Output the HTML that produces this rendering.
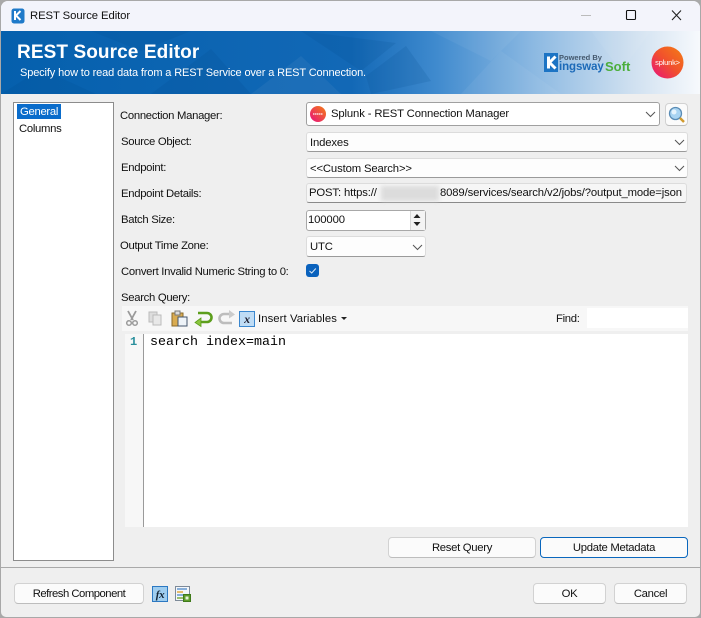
<!DOCTYPE html>
<html><head><meta charset="utf-8"><style>
html,body{margin:0;padding:0;background:#a9a9a9}
#w{position:relative;width:701px;height:618px;overflow:hidden;background:#efefef;font:11.3px "Liberation Sans",sans-serif;letter-spacing:-.3px;color:#111;box-sizing:border-box;border:1px solid #a8a8a8;border-radius:8px 8px 6px 6px}
#w>*{position:absolute}
.t{white-space:nowrap;line-height:14px}
.v{letter-spacing:-.14px}
.f{background:#fdfdfd;border:1px solid #dcdcdc;border-bottom-color:#9a9a9a;border-radius:3px;box-sizing:border-box}
.b{background:#fbfbfb;border:1px solid #d2d2d2;border-bottom-color:#bdbdbd;border-radius:4px;box-sizing:border-box;text-align:center;line-height:21px;white-space:nowrap}
</style></head><body>
<div id="w" style="left:0;top:0">
<div style="left:0;top:0;width:701px;height:30px;background:#f3f4fb"></div>
<svg style="left:10px;top:7px" width="14" height="16"><rect width="13" height="15" x=".5" y=".5" rx="2.5" fill="#1f7ac9"/><path d="M4 3v9M9.500 3L5 7.500l4.500 4.500" stroke="#fff" stroke-width="2" fill="none"/></svg>
<div class="t" style="left:29px;top:8px;letter-spacing:-.08px">REST Source Editor</div>
<svg style="left:579px;top:7px" width="115" height="16" fill="none"><path d="M1 7.500h10" stroke="#bbb"/><rect x="46.500" y="2.500" width="9" height="9" rx="1" stroke="#111" stroke-width="1.100"/><path d="M92 2.500l9 9.500M101 2.500l-9 9.500" stroke="#222" stroke-width="1.100"/></svg>

<svg style="left:0;top:30px" width="701" height="63" viewBox="0 0 701 63">
<defs><linearGradient id="g"><stop offset="0" stop-color="#0560ad"/><stop offset=".5" stop-color="#1268b6"/><stop offset=".62" stop-color="#3f8ace"/><stop offset=".76" stop-color="#8cb9e2"/><stop offset=".9" stop-color="#cfe0f0"/><stop offset="1" stop-color="#f8fafd"/></linearGradient></defs>
<rect width="701" height="63" fill="url(#g)"/>
<g fill="#03478a" opacity=".14"><polygon points="0,63 40,38 95,63"/><polygon points="150,63 210,18 250,63"/><polygon points="300,0 360,40 395,12"/><polygon points="370,63 365,45 405,15 430,50"/><polygon points="90,0 140,20 190,0"/></g>
<g fill="#fff" opacity=".05"><polygon points="430,0 490,30 520,0"/><polygon points="460,63 500,20 560,63"/><polygon points="250,63 300,25 340,63"/><polygon points="590,0 620,40 650,0"/></g>
</svg>
<div class="t" style="left:16px;top:40px;font:bold 19px/24px 'Liberation Sans',sans-serif;color:#fff;letter-spacing:.1px">REST Source Editor</div>
<div class="t" style="left:19px;top:65px;color:#fff;font-size:11px;letter-spacing:-.13px">Specify how to read data from a REST Service over a REST Connection.</div>

<svg style="left:543px;top:52px" width="14" height="19"><rect width="14" height="19" fill="#1d74c4"/><path d="M4.500 3.500v12M11.500 3.500L5.500 9.500l6 6" stroke="#fff" stroke-width="3" fill="none"/></svg>
<div class="t" style="left:558px;top:52px;font:bold 7.500px/9px 'Liberation Sans',sans-serif;color:#45596e;letter-spacing:0">Powered By</div>
<div class="t" style="left:558px;top:59px;font:bold 11.500px/14px 'Liberation Sans',sans-serif;color:#1c6ab8;letter-spacing:-.1px">ingsway</div>
<div class="t" style="left:604px;top:58px;font:bold 13px/15px 'Liberation Sans',sans-serif;color:#4cae3c;letter-spacing:0">Soft</div>
<svg style="left:650px;top:45px" width="33" height="33"><defs><linearGradient id="s" x1="0" y1="1" x2="1" y2="0"><stop offset="0" stop-color="#e8107e"/><stop offset=".5" stop-color="#f1502d"/><stop offset="1" stop-color="#f47f14"/></linearGradient></defs><circle cx="16.500" cy="16.500" r="16" fill="url(#s)"/><text x="16.500" y="19" font-family="Liberation Sans" font-size="7.500" fill="#fff" text-anchor="middle" letter-spacing="-.2">splunk&gt;</text></svg>

<div style="left:12px;top:101px;width:101px;height:459px;background:#fff;border:1px solid #8c8c8c;box-sizing:border-box"></div>
<div class="t" style="left:16px;top:103px;width:44px;height:15px;line-height:16px;background:#0a6ccb;color:#fff;padding-left:3px;box-sizing:border-box">General</div>
<div class="t" style="left:18px;top:121px">Columns</div>

<div class="t" style="left:119px;top:108px">Connection Manager:</div>
<div class="t" style="left:120px;top:134px">Source Object:</div>
<div class="t" style="left:120px;top:160px">Endpoint:</div>
<div class="t" style="left:120px;top:186px">Endpoint Details:</div>
<div class="t" style="left:120px;top:212px">Batch Size:</div>
<div class="t" style="left:119px;top:238px">Output Time Zone:</div>
<div class="t" style="left:120px;top:264px">Convert Invalid Numeric String to 0:</div>
<div class="t" style="left:120px;top:290px">Search Query:</div>

<div class="f" style="left:305px;top:101px;width:354px;height:24px;border-color:#a0a0a0;background:#fff"></div>
<svg style="left:309px;top:105px" width="16" height="16"><defs><linearGradient id="s2" x1="0" y1="1" x2="1" y2="0"><stop offset="0" stop-color="#e8107e"/><stop offset="1" stop-color="#f47f14"/></linearGradient></defs><circle cx="8" cy="8" r="8" fill="url(#s2)"/><path d="M3 8h10" stroke="#fff" stroke-width="1.500" stroke-dasharray="1.500 .5" opacity=".8"/></svg>
<div class="t v" style="left:330px;top:106px">Splunk - REST Connection Manager</div>
<svg style="left:644px;top:110px" width="11" height="7" fill="none"><path d="M1 1l4.500 4.500L10 1" stroke="#555"/></svg>
<div class="b" style="left:664px;top:102px;width:23px;height:23px"></div>
<svg style="left:667px;top:105px" width="18" height="18"><circle cx="7.500" cy="7.500" r="6" fill="#a9d4f2" stroke="#5a8cb5" stroke-width="1.300"/><circle cx="6" cy="6" r="2.500" fill="#e6f4fd"/><path d="M12 12l4 4" stroke="#d19a2e" stroke-width="2.500"/></svg>

<div class="f" style="left:305px;top:131px;width:382px;height:20px"></div>
<div class="t v" style="left:309px;top:135px">Indexes</div>
<svg style="left:673px;top:138px" width="11" height="7" fill="none"><path d="M1 1l4.500 4.500L10 1" stroke="#555"/></svg>
<div class="f" style="left:305px;top:157px;width:382px;height:20px"></div>
<div class="t v" style="left:309px;top:161px">&lt;&lt;Custom Search&gt;&gt;</div>
<svg style="left:673px;top:164px" width="11" height="7" fill="none"><path d="M1 1l4.500 4.500L10 1" stroke="#555"/></svg>

<div class="f" style="left:305px;top:182px;width:381px;height:20px;background:#f6f6f6;border-bottom-color:#8a8a8a"></div>
<div class="t v" style="left:308px;top:185px">POST: https://</div>
<div style="left:380px;top:185px;width:58px;height:15px;background:#dcdcdc;filter:blur(2px)"></div>
<div class="t v" style="left:439px;top:185px">8089/services/search/v2/jobs/?output_mode=json</div>

<div class="f" style="left:305px;top:209px;width:120px;height:21px;border-color:#a8a8a8;background:#fff"></div>
<div class="t v" style="left:307px;top:212px">100000</div>
<div style="left:409px;top:210px;width:15px;height:19px;background:#f4f4f4;border-left:1px solid #d8d8d8;box-sizing:border-box"></div>
<svg style="left:411px;top:211px" width="10" height="16"><path d="M5 2L8.500 6h-7zM5 14L1.500 10h7z" fill="#222"/></svg>

<div class="f" style="left:305px;top:235px;width:120px;height:21px"></div>
<div class="t v" style="left:309px;top:239px">UTC</div>
<svg style="left:411px;top:243px" width="11" height="7" fill="none"><path d="M1 1l4.500 4.500L10 1" stroke="#555"/></svg>

<div style="left:305px;top:263px;width:13px;height:13px;background:#0a62bd;border-radius:3px"></div>
<svg style="left:305px;top:263px" width="13" height="13" fill="none"><path d="M3.500 7l2.200 2L9.800 4.500" stroke="#dbe9f7" stroke-width="1"/></svg>

<div style="left:121px;top:305px;width:566px;height:25px;background:#f7f7f7"></div>
<svg style="left:124px;top:308px" width="140" height="20">
<path d="M3 2l5 9M11 2L6 11" stroke="#9a9a9a" stroke-width="1.800" fill="none"/><circle cx="4" cy="14" r="2.300" fill="none" stroke="#9a9a9a" stroke-width="1.500"/><circle cx="10" cy="14" r="2.300" fill="none" stroke="#9a9a9a" stroke-width="1.500"/>
<rect x="24" y="3" width="8" height="10" fill="#ddd" stroke="#bbb"/><rect x="28" y="6" width="8" height="10" fill="#e8e8e8" stroke="#bbb"/>
<rect x="47" y="4" width="11" height="13" fill="#d9ab50" stroke="#8a6a2a"/><rect x="50" y="2" width="5" height="4" fill="#ddd" stroke="#777"/><rect x="53" y="8" width="9" height="9" fill="#eef3f8" stroke="#44566c"/>
<path d="M73 4h9a4.500 4.500 0 0 1 0 9h-8" fill="none" stroke="#5c9e1c" stroke-width="2.600"/><path d="M76 9l-6 4.500 6 4z" fill="#8cc63f" stroke="#5c9e1c" stroke-width=".8"/>
<path d="M107 5h-8a4.500 4.500 0 0 0 0 9h8" fill="none" stroke="#bdbdbd" stroke-width="2.600"/><path d="M104 1l6 4.500-6 4z" fill="#ccc"/>
<rect x="114.500" y="2.500" width="15" height="15" fill="#bfdcf5" stroke="#3a87cf"/><text x="122" y="14" font-family="Liberation Serif" font-style="italic" font-weight="bold" font-size="12" fill="#223" text-anchor="middle">x</text>
</svg>
<div class="t" style="left:257px;top:311px;letter-spacing:.08px">Insert Variables</div>
<svg style="left:340px;top:316px" width="7" height="4"><path d="M0 0h6L3 3z" fill="#222"/></svg>
<div class="t" style="left:555px;top:311px">Find:</div>
<div style="left:586px;top:307px;width:101px;height:20px;background:#fff"></div>

<div style="left:124px;top:333px;width:563px;height:193px;background:#fff"></div>
<div style="left:124px;top:333px;width:18px;height:193px;background:#f7f7f7;border-right:1px solid #9a9a9a"></div>
<div class="t" style="left:129px;top:334px;font:bold 12px/14px 'Liberation Mono',monospace;color:#2a8f9c;letter-spacing:0">1</div>
<div class="t" style="left:149px;top:334px;font:13.330px/15px 'Liberation Mono',monospace;color:#000;letter-spacing:0">search index=main</div>

<div class="b" style="left:387px;top:536px;width:148px;height:21px">Reset Query</div>
<div class="b" style="left:539px;top:536px;width:148px;height:21px;border-color:#0a67bd">Update Metadata</div>

<div style="left:0;top:566px;width:701px;height:1px;background:#a9a9a9"></div>
<div class="b" style="left:13px;top:582px;width:130px;height:21px;letter-spacing:-.5px">Refresh Component</div>
<svg style="left:151px;top:585px" width="17" height="17"><rect x=".5" y=".5" width="15" height="15" fill="#9fcdef" stroke="#2b78c2"/><text x="8" y="12" font-family="Liberation Serif" font-style="italic" font-weight="bold" font-size="11" fill="#123" text-anchor="middle">fx</text></svg>
<svg style="left:174px;top:585px" width="18" height="18"><rect x=".5" y=".5" width="14" height="14" fill="#f5f7fa" stroke="#7d8a99"/><path d="M2 3h10" stroke="#6497cf" stroke-width="1.500"/><path d="M2 6h6" stroke="#e0a93c" stroke-width="1.500"/><path d="M2 9h8" stroke="#6497cf" stroke-width="1.500"/><path d="M2 12h6" stroke="#7cad3f" stroke-width="1.500"/><rect x="8.500" y="8.500" width="7" height="7" fill="#5d9c2b" stroke="#3f7a1a"/><rect x="10.500" y="10.500" width="3" height="3" fill="#e8f3dc"/></svg>
<div class="b" style="left:532px;top:582px;width:73px;height:21px">OK</div>
<div class="b" style="left:613px;top:582px;width:73px;height:21px">Cancel</div>
</div>
</body></html>
